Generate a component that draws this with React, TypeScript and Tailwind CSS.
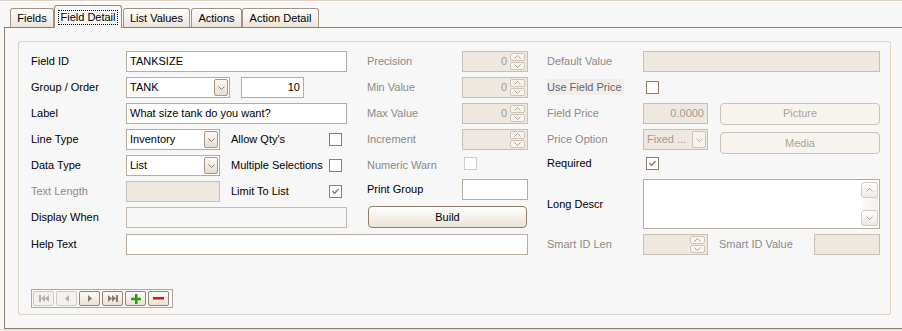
import React from 'react';

type BoxProps = {
  w: string;
  value?: string;
  right?: boolean;
  tone?: 'white' | 'disabled' | 'flat';
  className?: string;
};

const fills = {
  white: 'bg-white border-[#b7aa9e] text-black',
  disabled: 'bg-[#efe8e0] border-[#c9beb4] text-[#a39a92]',
  flat: 'bg-[#f7f7f7] border-[#c4bab0] text-black',
};

function Box({ w, value = '', right = false, tone = 'white', className = '' }: BoxProps) {
  return (
    <div
      className={`flex h-[21px] shrink-0 items-center border px-[3px] ${fills[tone]} ${w} ${
        right ? 'justify-end' : ''
      } ${className}`}
    >
      {value}
    </div>
  );
}

function Chevron({ color = '#8c7b6a', up = false }: { color?: string; up?: boolean }) {
  return (
    <svg width="7" height="4" viewBox="0 0 7 4">
      <polyline
        points={up ? '0.5,3.5 3.5,0.5 6.5,3.5' : '0.5,0.5 3.5,3.5 6.5,0.5'}
        fill="none"
        stroke={color}
        strokeWidth="1"
      />
    </svg>
  );
}

function Combo({ w, value, disabled = false }: { w: string; value: string; disabled?: boolean }) {
  return (
    <div
      className={`flex h-[21px] shrink-0 items-center border pl-[3px] ${w} ${
        disabled ? 'border-[#c9beb4] bg-[#efe8e0] text-[#a39a92]' : 'border-[#b7aa9e] bg-white text-black'
      }`}
    >
      <span className="grow truncate">{value}</span>
      <div
        className={`mr-[1px] flex h-[17px] w-[14px] items-center justify-center rounded-[2px] border ${
          disabled
            ? 'border-[#cdc3b9] bg-[#f6f2ed]'
            : 'border-[#a69585] bg-gradient-to-b from-[#fcfaf7] to-[#e7ddd0]'
        }`}
      >
        <Chevron color={disabled ? '#b9aea3' : '#8c7b6a'} />
      </div>
    </div>
  );
}

function Spin({ w, value = '' }: { w: string; value?: string }) {
  return (
    <div className={`flex h-[21px] shrink-0 items-center border border-[#c9beb4] bg-[#efe8e0] ${w}`}>
      <span className="grow pr-[3px] text-right text-[#a39a92]">{value}</span>
      <div className="mr-[2px] flex flex-col gap-px">
        <div className="flex h-[8px] w-[15px] items-center justify-center rounded-[2px] border border-[#cdc3b9] bg-[#f8f5f1]">
          <Chevron color="#aa9f95" up />
        </div>
        <div className="flex h-[8px] w-[15px] items-center justify-center rounded-[2px] border border-[#cdc3b9] bg-[#f8f5f1]">
          <Chevron color="#aa9f95" />
        </div>
      </div>
    </div>
  );
}

function Check({ checked = false, disabled = false }: { checked?: boolean; disabled?: boolean }) {
  return (
    <div
      className={`flex h-[13px] w-[13px] shrink-0 items-center justify-center border bg-white ${
        disabled ? 'border-[#d4ccc4]' : 'border-[#8f7d6b]'
      }`}
    >
      {checked && (
        <svg width="9" height="9" viewBox="0 0 9 9">
          <polyline points="1.5,4 3.5,6.5 7.5,2" fill="none" stroke="#8c7b6a" strokeWidth="1.3" />
        </svg>
      )}
    </div>
  );
}

function Btn({ label, w, disabled = false, className = '' }: { label: string; w: string; disabled?: boolean; className?: string }) {
  return (
    <div
      className={`flex h-[22px] shrink-0 items-center justify-center rounded-[4px] border ${w} ${
        disabled
          ? 'border-[#cbc1b7] bg-[#f7f4f0] text-[#aaa29a]'
          : 'border-[#8f7d6b] bg-gradient-to-b from-white to-[#ebe2d6] text-black'
      } ${className}`}
    >
      {label}
    </div>
  );
}

function Label({ text, dim = false, w = 'w-[95px]' }: { text: string; dim?: boolean; w?: string }) {
  return <span className={`shrink-0 ${w} ${dim ? 'text-[#8e8984]' : 'text-black'}`}>{text}</span>;
}

function Tab({ label, w, active = false, className = '' }: { label: string; w: string; active?: boolean; className?: string }) {
  if (active) {
    return (
      <div
        className={`relative z-10 -mb-px flex h-[23px] items-center justify-center rounded-t-[3px] border border-b-0 border-[#9c8b7a] bg-[#f7f7f7] ${w} ${className}`}
      >
        <span className="border border-dotted border-black px-px leading-[13px]">{label}</span>
      </div>
    );
  }
  return (
    <div
      className={`flex h-[19px] items-center justify-center rounded-t-[3px] border border-b-0 border-[#a39382] bg-gradient-to-b from-white to-[#ebe4d9] ${w} ${className}`}
    >
      {label}
    </div>
  );
}

function NavBtn({ children, disabled = false }: { children: React.ReactNode; disabled?: boolean }) {
  return (
    <div
      className={`flex h-[15px] w-[21px] items-center justify-center rounded-[2px] border ${
        disabled ? 'border-[#cfcac5] bg-[#f4f2f0]' : 'border-[#96846f] bg-gradient-to-b from-[#fcfaf7] to-[#ebe2d6]'
      }`}
    >
      {children}
    </div>
  );
}

export default function App() {
  const dim = '#b7afa8';
  const on = '#8c7b6a';

  return (
    <div className="h-[331px] w-[902px] overflow-hidden bg-[#f7f7f7] font-['Liberation_Sans',Arial,sans-serif] text-[11px] text-black">
      <div className="h-px bg-[#dcd1c2]" />
      <div className="h-px bg-white" />

      <div className="flex h-[25px] items-end pl-[10px]">
        <Tab label="Fields" w="w-[44px]" />
        <Tab label="Field Detail" w="w-[68px]" active />
        <Tab label="List Values" w="w-[67px]" className="ml-px" />
        <Tab label="Actions" w="w-[51px]" className="ml-px" />
        <Tab label="Action Detail" w="w-[77px]" />
      </div>

      <div className="ml-[4px] h-[302px] border-t border-b border-l border-[#8f7d6b] pt-[13px] pl-[13px]">
        <div className="h-[274px] w-[873px] rounded-[3px] border border-[#dcd2c7] border-r-[#e6d3b4] pt-[9px] pl-[12px]">
          <div className="flex">
            {/* left + middle */}
            <div className="flex w-[497px] flex-col">
              <div className="flex">
                <div className="flex w-[336px] flex-col gap-[5px]">
                  <div className="flex h-[21px] items-center">
                    <Label text="Field ID" />
                    <Box w="w-[221px]" value="TANKSIZE" />
                  </div>
                  <div className="flex h-[21px] items-center">
                    <Label text="Group / Order" />
                    <Combo w="w-[104px]" value="TANK" />
                    <Box w="w-[63px]" value="10" right className="ml-[11px]" />
                  </div>
                  <div className="flex h-[21px] items-center">
                    <Label text="Label" />
                    <Box w="w-[221px]" value="What size tank do you want?" />
                  </div>
                  <div className="flex h-[21px] items-center">
                    <Label text="Line Type" />
                    <Combo w="w-[94px]" value="Inventory" />
                    <span className="ml-[11px] w-[98px]">Allow Qty's</span>
                    <Check />
                  </div>
                  <div className="flex h-[21px] items-center">
                    <Label text="Data Type" />
                    <Combo w="w-[94px]" value="List" />
                    <span className="ml-[11px] w-[98px]">Multiple Selections</span>
                    <Check />
                  </div>
                  <div className="flex h-[21px] items-center">
                    <Label text="Text Length" dim />
                    <Box w="w-[94px]" tone="disabled" />
                    <span className="ml-[11px] w-[98px]">Limit To List</span>
                    <Check checked />
                  </div>
                  <div className="flex h-[21px] items-center">
                    <Label text="Display When" />
                    <Box w="w-[221px]" tone="flat" />
                  </div>
                </div>

                <div className="flex w-[161px] flex-col">
                  <div className="flex flex-col gap-[5px]">
                    <div className="flex h-[21px] items-center">
                      <Label text="Precision" dim />
                      <Spin w="w-[66px]" value="0" />
                    </div>
                    <div className="flex h-[21px] items-center">
                      <Label text="Min Value" dim />
                      <Spin w="w-[66px]" value="0" />
                    </div>
                    <div className="flex h-[21px] items-center">
                      <Label text="Max Value" dim />
                      <Spin w="w-[66px]" value="0" />
                    </div>
                    <div className="flex h-[21px] items-center">
                      <Label text="Increment" dim />
                      <Spin w="w-[66px]" />
                    </div>
                    <div className="flex h-[21px] items-center">
                      <Label text="Numeric Warn" dim />
                      <div className="ml-[2px] -mt-[4px]">
                        <Check disabled />
                      </div>
                    </div>
                  </div>
                  <div className="mt-[3px] flex h-[21px] items-center">
                    <Label text="Print Group" />
                    <Box w="w-[66px]" />
                  </div>
                  <Btn label="Build" w="w-[159px]" className="mt-[6px] ml-px" />
                </div>
              </div>

              <div className="mt-[6px] flex h-[21px] items-center">
                <Label text="Help Text" />
                <Box w="w-[402px]" />
              </div>
            </div>

            {/* right */}
            <div className="ml-[19px] flex w-[333px] flex-col">
              <div className="flex flex-col gap-[5px]">
                <div className="flex h-[21px] items-center">
                  <Label text="Default Value" dim w="w-[96px]" />
                  <Box w="w-[237px]" tone="disabled" />
                </div>
                <div className="flex h-[21px] items-center">
                  <span className="w-[96px] shrink-0">
                    <span className="bg-[#f1eee9] py-[2px] pr-[1px] text-[#5f6472]">Use Field Price</span>
                  </span>
                  <div className="ml-[3px]">
                    <Check />
                  </div>
                </div>
                <div className="flex h-[21px] items-center">
                  <Label text="Field Price" dim w="w-[96px]" />
                  <Box w="w-[65px]" tone="disabled" value="0.0000" right />
                  <Btn label="Picture" w="w-[160px]" disabled className="ml-[12px]" />
                </div>
                <div className="flex h-[21px] items-start">
                  <Label text="Price Option" dim w="w-[96px] self-center" />
                  <Combo w="w-[65px]" value="Fixed ..." disabled />
                  <Btn label="Media" w="w-[160px]" disabled className="mt-[3px] ml-[12px]" />
                </div>
                <div className="flex h-[17px] items-center">
                  <Label text="Required" w="w-[96px]" />
                  <div className="ml-[3px]">
                    <Check checked />
                  </div>
                </div>
              </div>

              <div className="mt-[7px] flex items-center">
                <Label text="Long Descr" w="w-[96px]" />
                <div className="flex h-[50px] w-[237px] justify-end border border-[#b7aa9e] bg-white py-[2px] pr-px">
                  <div className="flex w-[17px] flex-col justify-between bg-gradient-to-r from-[#fdfcfa] to-[#f4efe9]">
                    <div className="flex h-[16px] items-center justify-center rounded-[3px] border border-[#d2c9c0] bg-gradient-to-b from-white to-[#efe9e2]">
                      <Chevron color="#b4a99e" up />
                    </div>
                    <div className="flex h-[16px] items-center justify-center rounded-[3px] border border-[#d2c9c0] bg-gradient-to-b from-white to-[#efe9e2]">
                      <Chevron color="#b4a99e" />
                    </div>
                  </div>
                </div>
              </div>

              <div className="mt-[5px] flex h-[21px] items-center">
                <Label text="Smart ID Len" dim w="w-[96px]" />
                <Spin w="w-[65px]" />
                <span className="ml-[11px] w-[95px] shrink-0 text-[#8e8984]">Smart ID Value</span>
                <Box w="w-[66px]" tone="disabled" />
              </div>
            </div>
          </div>

          <div className="mt-[34px] flex w-[142px] items-center gap-[2px] border border-[#a9a9a9] py-px pl-px">
            <NavBtn disabled>
              <svg width="10" height="7" viewBox="0 0 10 7">
                <rect x="0" y="0" width="2" height="7" fill={dim} />
                <polygon points="6,0 6,7 2,3.5" fill={dim} />
                <polygon points="10,0 10,7 6,3.5" fill={dim} />
              </svg>
            </NavBtn>
            <NavBtn disabled>
              <svg width="4" height="7" viewBox="0 0 4 7">
                <polygon points="4,0 4,7 0,3.5" fill={dim} />
              </svg>
            </NavBtn>
            <NavBtn>
              <svg width="4" height="7" viewBox="0 0 4 7">
                <polygon points="0,0 0,7 4,3.5" fill={on} />
              </svg>
            </NavBtn>
            <NavBtn>
              <svg width="10" height="7" viewBox="0 0 10 7">
                <polygon points="0,0 0,7 4,3.5" fill={on} />
                <polygon points="4,0 4,7 8,3.5" fill={on} />
                <rect x="8" y="0" width="2" height="7" fill={on} />
              </svg>
            </NavBtn>
            <NavBtn>
              <svg width="10" height="10" viewBox="0 0 10 10">
                <rect x="4" y="0" width="2.5" height="10" fill="#2f9a14" />
                <rect x="0" y="3.75" width="10" height="2.5" fill="#2f9a14" />
              </svg>
            </NavBtn>
            <NavBtn>
              <svg width="11" height="3" viewBox="0 0 11 3">
                <rect x="0" y="0" width="11" height="2.5" fill="#d4161a" />
              </svg>
            </NavBtn>
          </div>
        </div>
      </div>
      <div className="h-[2px] bg-[#ebe3d8]" />
    </div>
  );
}
